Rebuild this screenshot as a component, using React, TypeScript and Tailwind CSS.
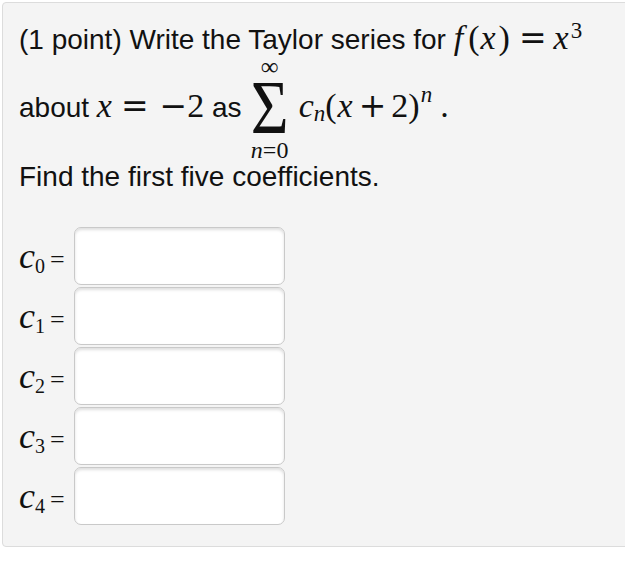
import React from 'react';

const sans = "font-['Liberation_Sans',Arial,sans-serif]";
const serif = "font-['Liberation_Serif',serif]";
const op = "font-['DejaVu_Serif',serif]";

function Coef({ k }: { k: number }) {
    return (
        <div className="flex items-center h-[58px]">
            <div className={`${serif} w-[50px] flex items-baseline leading-none text-[#111]`}>
                <span className="italic text-[36px]">c</span>
                <span className="text-[20px] relative top-[5px]">{k}</span>
                <span className="ml-[5px] text-[26px]">=</span>
            </div>
            <input
                type="text"
                className="ml-[5px] w-[211px] h-[58px] bg-white border border-[#c9c9c9] rounded-[7px] shadow-[inset_0_2px_3px_rgba(0,0,0,0.13)] outline-none"
            />
        </div>
    );
}

export default function App() {
    return (
        <div className="w-[625px] h-[583px] overflow-hidden bg-white">
            <div className={`${sans} ml-[2px] mt-[2px] w-[640px] h-[545px] bg-[#f4f4f4] border border-[#dcdcdc] rounded-[4px] pl-[16px] pt-[17px] text-[#111]`}>
                {/* line 1 */}
                <div className="text-[28px] leading-[40px] whitespace-nowrap">
                    (1 point) Write the Taylor series for{' '}
                    <span className={`${serif} text-[34px] leading-none`}>
                        <span className="italic">f</span>
                        <span className="ml-[5px]">(</span>
                        <span className="italic ml-[1px]">x</span>
                        <span className="ml-[3px]">)</span>
                        <span className={`${op} text-[33px] leading-none ml-[9px]`}>=</span>
                        <span className="italic ml-[7px]">x</span>
                        <span className="text-[23px] leading-none relative top-[-11px] ml-[2px]">3</span>
                    </span>
                </div>

                {/* line 2 with the sum */}
                <div className="flex items-start h-[100px] whitespace-nowrap">
                    <div className="text-[28px] leading-[40px] mt-[28px]">
                        about{' '}
                        <span className={`${serif} text-[34px] leading-none`}>
                            <span className="italic">x</span>
                            <span className={`${op} text-[33px] leading-none ml-[9px]`}>=</span>
                            <span className={`${op} text-[33px] leading-none ml-[11px]`}>−</span>
                            <span>2</span>
                        </span>{' '}
                        as
                    </div>
                    <div className={`${serif} w-[40px] ml-[8px] flex flex-col items-center`}>
                        <span className="text-[25px] leading-[24px] h-[24px] mt-[-5px]">∞</span>
                        <span className="text-[65px] leading-[50px] h-[50px] mt-[3px] scale-y-[1.16]">Σ</span>
                        <span className="text-[24px] leading-[24px] h-[24px] mt-[6px]">
                            <span className="italic">n</span>=0
                        </span>
                    </div>
                    <div className={`${serif} text-[34px] leading-[40px] mt-[26px] ml-[9px]`}>
                        <span className="italic">c</span>
                        <span className="italic text-[23px] leading-none relative top-[4px]">n</span>
                        <span>(</span>
                        <span className="italic ml-[1px]">x</span>
                        <span className={`${op} text-[33px] leading-none ml-[6px]`}>+</span>
                        <span className="ml-[5px]">2</span>
                        <span>)</span>
                        <span className="italic text-[23px] leading-none relative top-[-15px] ml-[1px]">n</span>
                        <span className="ml-[8px]">.</span>
                    </div>
                </div>

                <div className="text-[28px] leading-[40px] mt-[-3px]">Find the first five coefficients.</div>

                {/* coefficient inputs */}
                <div className="flex flex-col gap-[2px] mt-[30px]">
                    {[0, 1, 2, 3, 4].map(k => (
                        <Coef key={k} k={k} />
                    ))}
                </div>
            </div>
        </div>
    );
}
